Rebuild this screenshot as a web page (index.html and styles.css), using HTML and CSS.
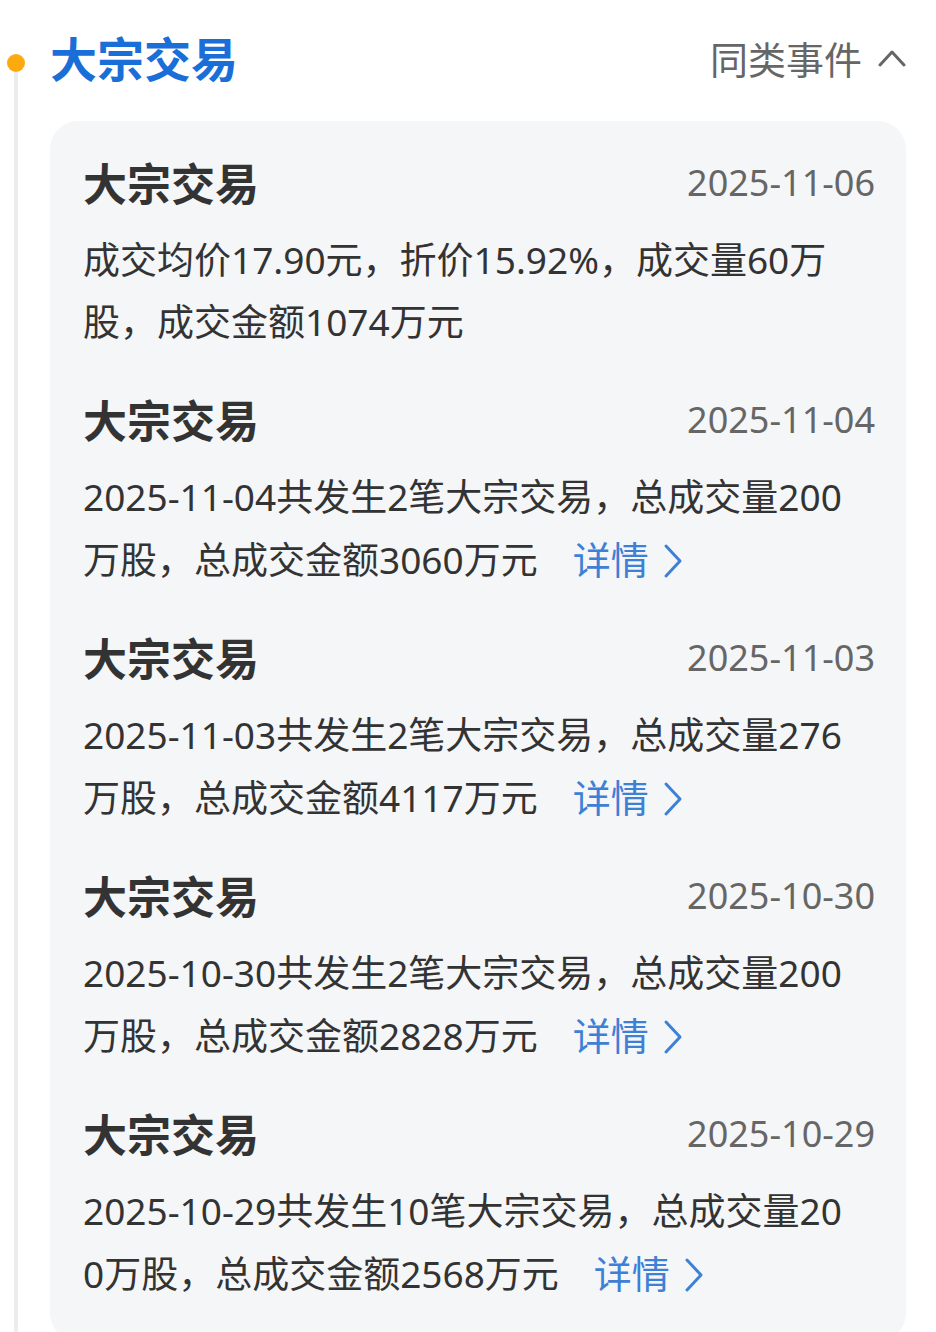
FILE: index.html
```html
<!DOCTYPE html>
<html lang="zh-CN">

<head>
    <meta charset="UTF-8">
    <meta name="viewport" content="width=device-width, initial-scale=1.0">
    <title>大宗交易</title>
    <link rel="stylesheet" href="styles.css">
</head>

<body>
    <div class="timeline">
        <div class="rail">
            <span class="dot"></span>
            <span class="line"></span>
        </div>

        <div class="content">
            <div class="head">
                <h2 class="head-title">大宗交易</h2>
                <div class="similar">
                    <span>同类事件</span>
                    <svg class="chev-up" width="28" height="18" viewBox="0 0 28 18">
                        <path d="M2 16 L14 3 L26 16" fill="none" stroke="#666" stroke-width="3" stroke-linecap="round" stroke-linejoin="round" />
                    </svg>
                </div>
            </div>

            <div class="card">
                <div class="item">
                    <div class="item-top">
                        <span class="item-title">大宗交易</span>
                        <span class="item-date">2025-11-06</span>
                    </div>
                    <p class="item-text">成交均价17.90元，折价15.92%，成交量60万股，成交金额1074万元</p>
                </div>

                <div class="item">
                    <div class="item-top">
                        <span class="item-title">大宗交易</span>
                        <span class="item-date">2025-11-04</span>
                    </div>
                    <p class="item-text">2025-11-04共发生2笔大宗交易，总成交量200万股，总成交金额3060万元<a class="more" href="#">详情<svg width="20" height="36" viewBox="0 0 20 36"><path d="M3 3 L17 18 L3 33" fill="none" stroke="#3d80d6" stroke-width="3" stroke-linecap="round" stroke-linejoin="round" /></svg></a></p>
                </div>

                <div class="item">
                    <div class="item-top">
                        <span class="item-title">大宗交易</span>
                        <span class="item-date">2025-11-03</span>
                    </div>
                    <p class="item-text">2025-11-03共发生2笔大宗交易，总成交量276万股，总成交金额4117万元<a class="more" href="#">详情<svg width="20" height="36" viewBox="0 0 20 36"><path d="M3 3 L17 18 L3 33" fill="none" stroke="#3d80d6" stroke-width="3" stroke-linecap="round" stroke-linejoin="round" /></svg></a></p>
                </div>

                <div class="item">
                    <div class="item-top">
                        <span class="item-title">大宗交易</span>
                        <span class="item-date">2025-10-30</span>
                    </div>
                    <p class="item-text">2025-10-30共发生2笔大宗交易，总成交量200万股，总成交金额2828万元<a class="more" href="#">详情<svg width="20" height="36" viewBox="0 0 20 36"><path d="M3 3 L17 18 L3 33" fill="none" stroke="#3d80d6" stroke-width="3" stroke-linecap="round" stroke-linejoin="round" /></svg></a></p>
                </div>

                <div class="item">
                    <div class="item-top">
                        <span class="item-title">大宗交易</span>
                        <span class="item-date">2025-10-29</span>
                    </div>
                    <p class="item-text">2025-10-29共发生10笔大宗交易，总成交量200万股，总成交金额2568万元<a class="more" href="#">详情<svg width="20" height="36" viewBox="0 0 20 36"><path d="M3 3 L17 18 L3 33" fill="none" stroke="#3d80d6" stroke-width="3" stroke-linecap="round" stroke-linejoin="round" /></svg></a></p>
                </div>
            </div>
        </div>
    </div>
</body>

</html>
```

FILE: styles.css
```css
body {
    margin: 0;
    background: #fff;
    font-family: "Noto Sans", "Noto Sans CJK SC", sans-serif;
    color: #333;
}

.timeline {
    display: flex;
    gap: 18px;
    padding-right: 30px;
    min-height: 1332px;
}

.rail {
    width: 32px;
    display: flex;
    flex-direction: column;
    align-items: center;
    padding-top: 54px;
}

.dot {
    width: 18px;
    height: 18px;
    border-radius: 50%;
    background: #fdaa0f;
    flex-shrink: 0;
}

.line {
    width: 4px;
    flex: 1;
    background: #ececec;
}

.content {
    flex: 1;
}

.head {
    height: 121px;
    box-sizing: border-box;
    padding-bottom: 4px;
    display: flex;
    align-items: center;
    justify-content: space-between;
}

.head-title {
    margin: 0;
    font-size: 47px;
    font-weight: 700;
    color: #1a6ed8;
    line-height: 60px;
}

.similar {
    display: flex;
    align-items: center;
    font-size: 38px;
    color: #666;
    line-height: 50px;
}

.chev-up {
    margin-left: 16px;
    margin-top: -2px;
}

.card {
    background: #f5f6f8;
    border-radius: 28px;
    padding: 31px 31px 36px 33px;
}

.item + .item {
    margin-top: 36px;
}

.item-top {
    display: flex;
    justify-content: space-between;
    align-items: center;
    height: 60px;
}

.item-title {
    font-size: 44px;
    font-weight: 700;
    color: #333;
}

.item-date {
    font-size: 36px;
    color: #666;
}

.item-text {
    margin: 17px 0 0 0;
    font-size: 37px;
    line-height: 62px;
    width: 770px;
    word-break: break-all;
}

.more {
    margin-left: 35px;
    font-size: 38px;
    color: #3d80d6;
    text-decoration: none;
    white-space: nowrap;
}

.more svg {
    margin-left: 14px;
    vertical-align: -5px;
}
```
